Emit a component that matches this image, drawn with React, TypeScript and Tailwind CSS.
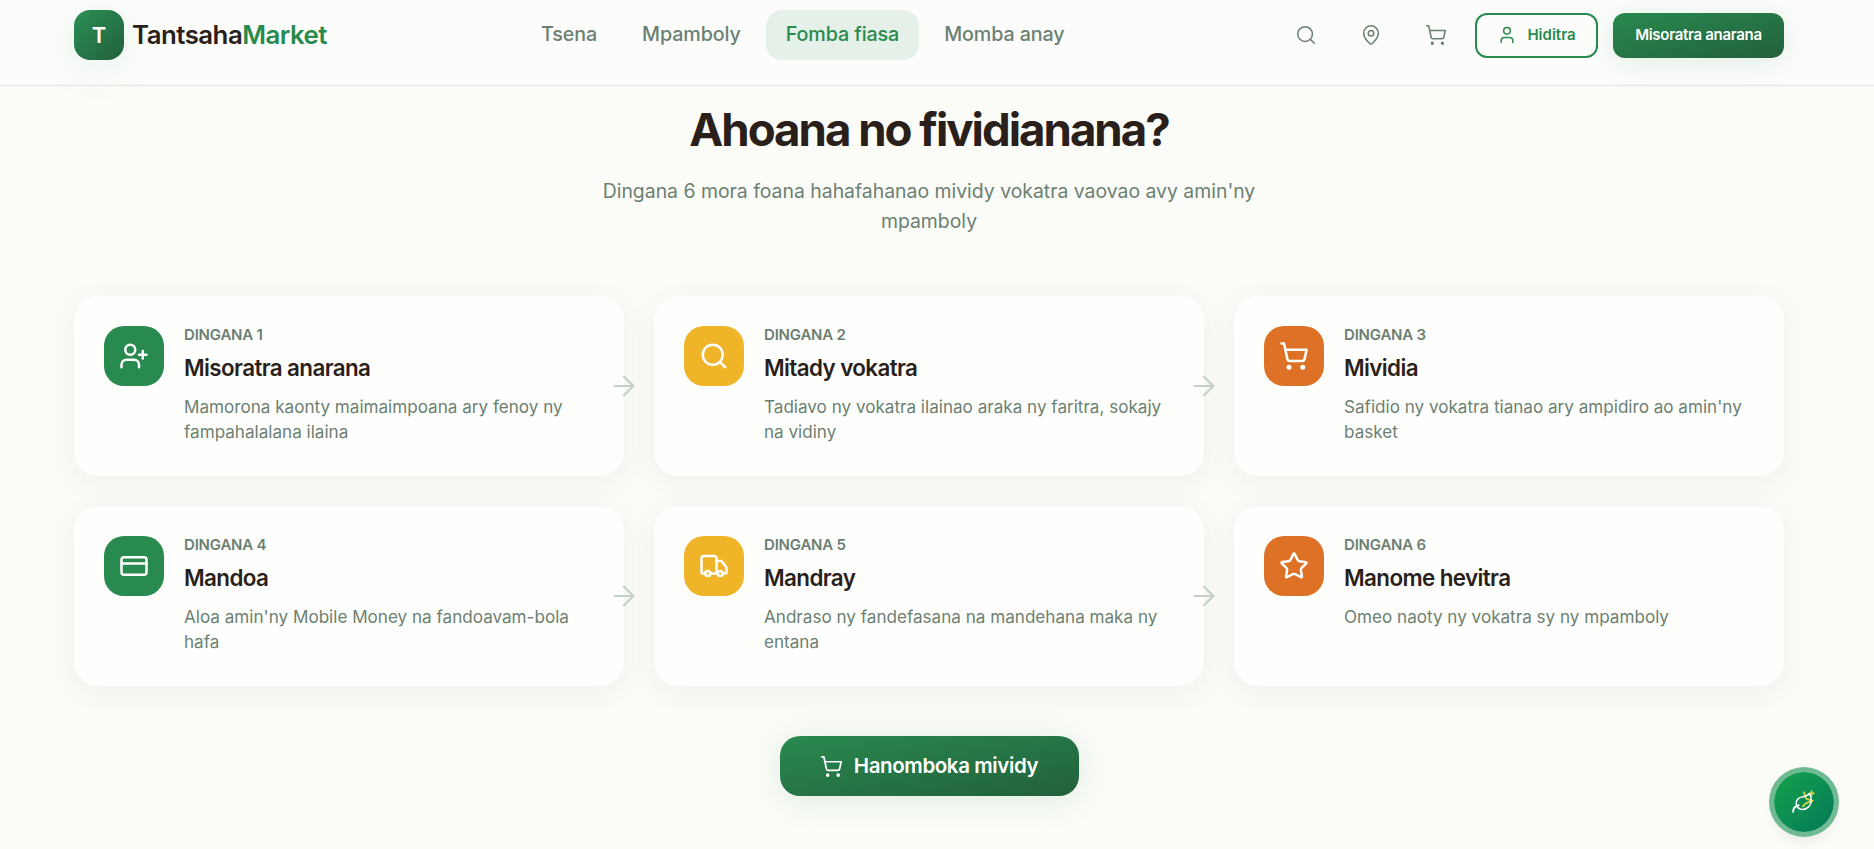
import { ArrowRight, CreditCard, MapPin, Search, ShoppingCart, Star, Truck, User, UserPlus } from "lucide-react";

const steps = [
  { n: 1, title: "Misoratra anarana", text: "Mamorona kaonty maimaimpoana ary fenoy ny fampahalalana ilaina", icon: UserPlus, bg: "bg-[#288a4e]" },
  { n: 2, title: "Mitady vokatra", text: "Tadiavo ny vokatra ilainao araka ny faritra, sokajy na vidiny", icon: Search, bg: "bg-[#f0b429]" },
  { n: 3, title: "Mividia", text: "Safidio ny vokatra tianao ary ampidiro ao amin'ny basket", icon: ShoppingCart, bg: "bg-[#dd7226]" },
  { n: 4, title: "Mandoa", text: "Aloa amin'ny Mobile Money na fandoavam-bola hafa", icon: CreditCard, bg: "bg-[#288a4e]" },
  { n: 5, title: "Mandray", text: "Andraso ny fandefasana na mandehana maka ny entana", icon: Truck, bg: "bg-[#f0b429]" },
  { n: 6, title: "Manome hevitra", text: "Omeo naoty ny vokatra sy ny mpamboly", icon: Star, bg: "bg-[#dd7226]" },
];

const nav = ["Tsena", "Mpamboly", "Fomba fiasa", "Momba anay"];

export default function App() {
  return (
    <div className="h-[849px] overflow-hidden bg-[#fbfcf8] font-['Inter',sans-serif] text-[#2a1f1a]">
      <header className="w-full border-b border-[#dfe6df] bg-[#fcfdfb] pt-[10px] pb-[25px]">
        <div className="flex h-[50px] w-[1858px] items-center px-[74px]">
          <div className="flex w-[300px] items-center gap-[8px]">
            <div className="flex h-[50px] w-[50px] items-center justify-center rounded-2xl bg-gradient-to-br from-[#2a9155] to-[#22603c] text-[22px] font-semibold text-white shadow-[0_8px_40px_rgba(40,138,78,0.1)]">T</div>
            <div className="text-[25.8px] font-semibold tracking-[-0.5px]">Tantsaha<span className="text-[#288a4e]">Market</span></div>
          </div>
          <nav className="ml-[147px] flex items-center gap-[5px] text-[19.7px] tracking-[-0.1px] text-[#6b8072]">
            {nav.map((item) => (
              <a key={item} className={item === "Fomba fiasa" ? "flex h-[50px] items-center rounded-2xl bg-[#e5f0e8] px-5 font-medium text-[#288a4e]" : "flex h-[50px] items-center px-5 font-medium"}>{item}</a>
            ))}
          </nav>
          <div className="ml-auto flex items-center">
            <div className="flex items-center gap-[43px] pr-[28px] text-[#6b8072]">
              <Search size={22} strokeWidth={1.7} />
              <MapPin size={22} strokeWidth={1.7} />
              <ShoppingCart size={22} strokeWidth={1.7} />
            </div>
            <button className="flex h-[45px] w-[123px] items-center justify-center gap-[10px] rounded-xl border-2 border-[#288a4e] text-[15px] font-semibold text-[#288a4e]">
              <User size={20} strokeWidth={1.8} />Hiditra
            </button>
            <button className="ml-[15px] h-[45px] w-[171px] rounded-xl bg-gradient-to-br from-[#288a4e] to-[#22603c] text-[15px] font-semibold tracking-[-0.3px] text-white shadow-[0_4px_28px_rgba(40,138,78,0.14)]">Misoratra anarana</button>
          </div>
        </div>
      </header>

      <main className="w-[1858px] px-[74px]">
        <h1 className="mt-[14px] text-center text-[45.6px] leading-[60px] font-bold tracking-[-2px]">Ahoana no fividianana?</h1>
        <p className="mx-auto mt-[16px] w-[680px] text-center text-[19.4px] leading-[30px] text-[#6b8072]">Dingana 6 mora foana hahafahanao mividy vokatra vaovao avy amin'ny mpamboly</p>

        <div className="mt-[60px] grid grid-cols-3 gap-[30px]">
          {steps.map((s) => {
            const Icon = s.icon;
            return (
              <div key={s.n} className="relative flex h-[180px] gap-5 rounded-3xl bg-[#fefefc] p-[30px] shadow-[0_6px_28px_rgba(60,90,70,0.07)]">
                <div className={`flex h-[60px] w-[60px] shrink-0 items-center justify-center rounded-[20px] text-white ${s.bg}`}>
                  <Icon size={30} strokeWidth={2} />
                </div>
                <div className="min-w-0">
                  <div className="-mt-[1px] text-[15px] leading-[20px] font-semibold tracking-[-0.2px] text-[#6b8072]">DINGANA {s.n}</div>
                  <div className="mt-[6px] text-[22.4px] leading-[34px] font-semibold tracking-[-0.6px]">{s.title}</div>
                  <p className="mt-[9px] text-[17.1px] leading-[25px] text-[#6b8072]">{s.text}</p>
                </div>
                {s.n % 3 !== 0 && (
                  <ArrowRight size={32} strokeWidth={1.6} className="absolute top-1/2 -right-[16px] -translate-y-1/2 text-[#c5d0c8]" />
                )}
              </div>
            );
          })}
        </div>

        <div className="mt-[50px] flex justify-center">
          <button className="flex h-[60px] w-[299px] items-center justify-center gap-[11px] rounded-[20px] bg-gradient-to-br from-[#288a4e] to-[#22603c] text-[20.5px] font-semibold tracking-[-0.4px] text-white shadow-[0_4px_32px_rgba(40,138,78,0.14)]">
            <ShoppingCart size={23} strokeWidth={1.8} />Hanomboka mividy
          </button>
        </div>
      </main>

      <button className="fixed right-[40px] bottom-[17px] flex h-[60px] w-[60px] items-center justify-center rounded-full bg-gradient-to-br from-[#16a34a] to-[#047857] ring-[5px] ring-[#6fba93] shadow-lg">
        <svg width="26" height="26" viewBox="0 0 24 24" fill="none" strokeWidth="1.7" strokeLinecap="round" strokeLinejoin="round">
          <path d="M12 3 14 9 20 11 14 13 11 16" stroke="#d8d44a" />
          <path d="M19 2v4M17 4h4" stroke="#d8d44a" />
          <path d="M11 20A7 7 0 0 1 9.8 6.1C15.5 5 17 4.5 19 2c1 2 2 4.2 2 8 0 5.5-4.8 10-10 10Z" stroke="#fff" transform="translate(1.5 2.5) scale(.82)" />
          <path d="M2 21c0-3 1.9-5.4 5.1-6" stroke="#fff" />
        </svg>
      </button>
    </div>
  );
}
